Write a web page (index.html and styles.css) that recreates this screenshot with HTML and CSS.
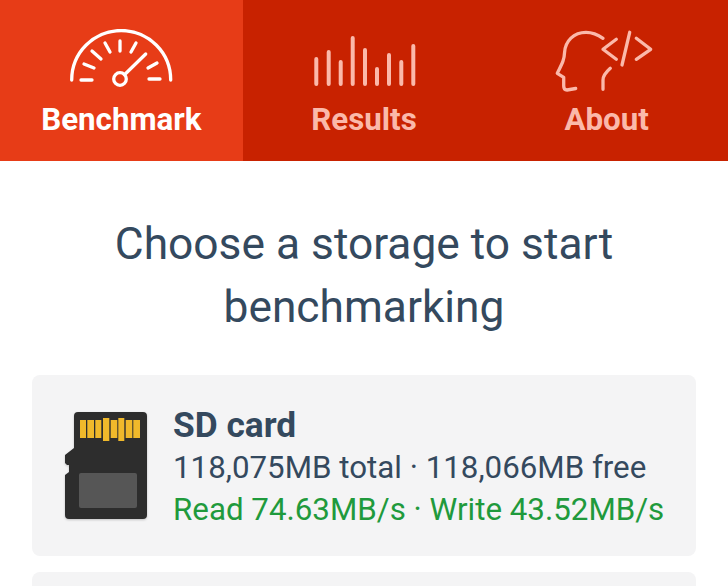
FILE: index.html
```html
<!DOCTYPE html>
<html lang="en">
<head>
  <meta charset="UTF-8" />
  <title>Storage Benchmark</title>
  <link rel="stylesheet" href="styles.css">
</head>
<body>
  <nav class="tabs">
    <div class="tab active">
      <svg class="tab-icon" viewBox="0 0 120 70" width="120" height="70">
        <path d="M10.700 51A49.500 49.500 0 0 1 109.700 51" />
        <path d="M20 51h11M88 50h11M23 35l10 4M96 34l-9 5M31 22l9 8M44 14l5 9M59 12v10M75 14l-5 9" />
        <circle cx="59" cy="50" r="6.300" />
        <path d="M63.700 45.500L84.700 25" />
      </svg>
      <span class="tab-label">Benchmark</span>
    </div>
    <div class="tab">
      <svg class="tab-icon bars" viewBox="0 0 120 70" width="120" height="70">
        <path d="M12.300 30v25M24.700 23v32M36.700 33v22M48.700 9v46M61 21v34M73 40v15M85 26v29M97.300 33v22M109.300 17v38" />
      </svg>
      <span class="tab-label">Results</span>
    </div>
    <div class="tab">
      <svg class="tab-icon" viewBox="0 0 120 70" width="120" height="70">
        <path d="M56 9.300C50 5 44 3.300 39 3.300C27 3.300 18 12 17.500 24C17.300 30 16 33 10.300 44.300L16.700 48.300V57C16.700 60 18 61 20 61L28.700 59.500" />
        <path d="M63.300 39.300C58 44 56 47 56 51V60.300" />
        <path d="M69.300 10.300L56 20.300L69.300 30.300" />
        <path d="M82.700 3.300L75 36" />
        <path d="M89.300 9.300L103.700 20.300L89.300 30.300" />
      </svg>
      <span class="tab-label">About</span>
    </div>
  </nav>

  <main class="content">
    <h1 class="main-heading">Choose a storage to start benchmarking</h1>

    <div class="card">
      <svg class="sd-icon" viewBox="0 0 84 110" width="84" height="110">
        <path class="sd-body" d="M14 1H79a4 4 0 0 1 4 4V104a4 4 0 0 1-4 4H5a4 4 0 0 1-4-4V64l4-3V54H3L1 52V44l9-7V5a4 4 0 0 1 4-4Z" />
        <rect class="sd-pad" x="15" y="62" width="58" height="35" rx="2" />
        <g class="sd-pins">
          <rect x="16" y="9" width="6" height="18" />
          <rect x="23.300" y="9" width="6.700" height="18" />
          <rect x="31.300" y="9" width="6" height="18" />
          <rect x="39" y="7" width="6.300" height="23" />
          <rect x="46.700" y="9" width="6.600" height="18" />
          <rect x="54.300" y="7" width="6" height="23" />
          <rect x="61.700" y="9" width="6.600" height="18" />
          <rect x="69.300" y="9" width="6.700" height="18" />
        </g>
      </svg>
      <div class="card-info">
        <div class="card-title">SD card</div>
        <div class="card-size">118,075MB total · 118,066MB free</div>
        <div class="card-speed">Read 74.63MB/s · Write 43.52MB/s</div>
      </div>
    </div>

    <div class="card card-next"></div>
  </main>
</body>
</html>
```

FILE: styles.css
```css
/* Reset & Base */
* {
  margin: 0;
  padding: 0;
  box-sizing: border-box;
  font-family: 'Roboto', sans-serif;
}

html, body {
  height: 586px;
  overflow: hidden;
  background: #fff;
}

/* Tabs */
.tabs {
  display: flex;
  height: 161px;
  background: #c82200;
}

.tab {
  flex: 1;
  display: flex;
  flex-direction: column;
  align-items: center;
  padding-top: 29px;
  color: #fbb9aa;
}

.tab.active {
  background: #e73c17;
  color: #fff;
}

.tab-icon {
  display: block;
  fill: none;
  stroke: currentColor;
  stroke-width: 3.300;
  stroke-linecap: round;
  stroke-linejoin: round;
}

.tab-icon.bars {
  stroke-width: 4;
}

.tab-label {
  margin-top: 2px;
  font-size: 31.300px;
  line-height: 38px;
  font-weight: 700;
}

/* Content */
.content {
  padding: 0 32px;
}

.main-heading {
  padding: 52px 40px 36px;
  text-align: center;
  color: #34495e;
  font-size: 44.300px;
  line-height: 63px;
  font-weight: 400;
}

/* Card */
.card {
  display: flex;
  align-items: center;
  height: 181px;
  margin-bottom: 16px;
  padding-left: 32px;
  background: #f4f4f5;
  border-radius: 8px;
}

.card-next {
  height: 14px;
  margin-bottom: 0;
  border-radius: 8px 8px 0 0;
}

.sd-icon {
  flex: none;
  margin-right: 25px;
  filter: drop-shadow(0 1px 1px rgba(0, 0, 0, 0.2));
}

.sd-body {
  fill: #2d2d2d;
}

.sd-pad {
  fill: #565656;
}

.sd-pins {
  fill: #f0b92b;
}

.card-info {
  padding-top: 2px;
}

.card-title {
  color: #34495e;
  font-size: 35.300px;
  line-height: 44px;
  font-weight: 700;
}

.card-size {
  color: #34495e;
  font-size: 31.300px;
  line-height: 42px;
}

.card-speed {
  color: #1f9a3c;
  font-size: 31.300px;
  line-height: 41px;
}
```
